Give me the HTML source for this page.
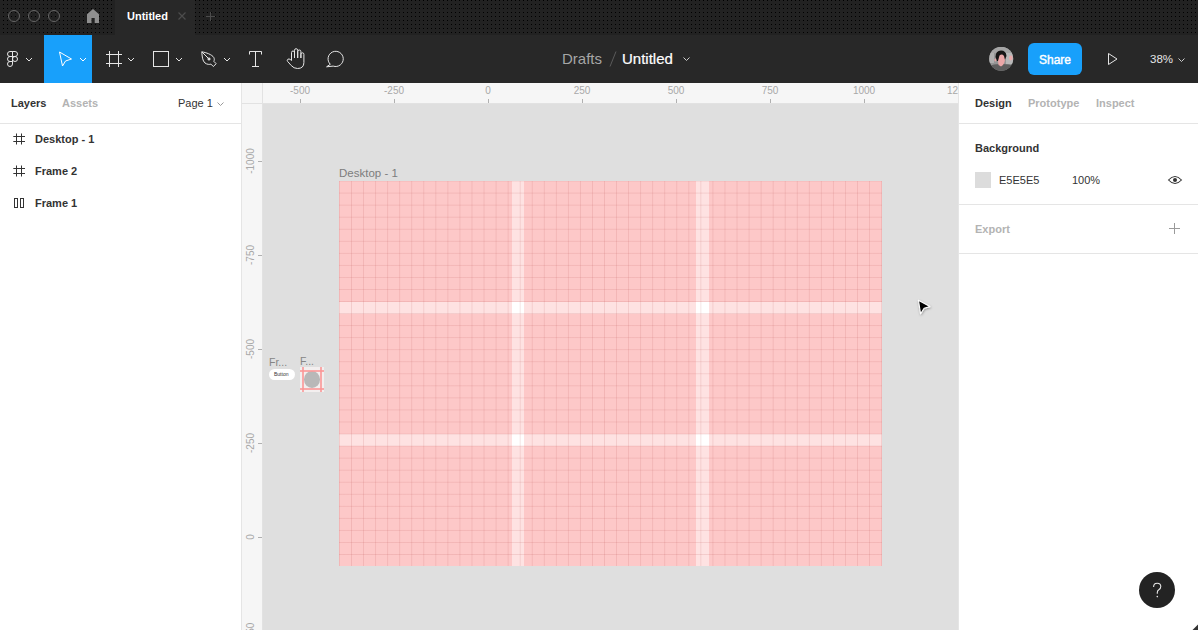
<!DOCTYPE html>
<html><head><meta charset="utf-8">
<style>
*{margin:0;padding:0;box-sizing:border-box}
html,body{width:1198px;height:630px;overflow:hidden;background:#fff;font-family:"Liberation Sans",sans-serif}
.a{position:absolute}
#title{left:0;top:0;width:1198px;height:35px;background:#202020}
#tab{left:115px;top:0;width:80px;height:35px;background:#282828}
#tool{left:0;top:35px;width:1198px;height:48px;background:#282828}
#sel{left:44px;top:35px;width:48px;height:48px;background:#18a0fb}
#lp{left:0;top:83px;width:242px;height:547px;background:#fff;border-right:1px solid #e5e5e5}
#rp{left:958px;top:83px;width:240px;height:547px;background:#fff;border-left:1px solid #e5e5e5}
#canvas{left:242px;top:83px;width:716px;height:547px;background:#dfdfdf}
#rtop{left:242px;top:83px;width:716px;height:21px;background:#f6f6f6;border-bottom:1px solid #e2e2e2}
#rleft{left:242px;top:83px;width:21px;height:547px;background:#f6f6f6;border-right:1px solid #e2e2e2}
.rl{font-size:10px;color:#a8a8a8;white-space:nowrap}
.tick{background:#b0b0b0}
svg{position:absolute;overflow:visible}
.t11b{font-size:11px;font-weight:bold;color:#333;white-space:nowrap}
</style></head><body>
<div id="title" class="a"></div>
<div class="a" style="left:0;top:0;width:1198px;height:35px;background:repeating-linear-gradient(90deg,#222 0 3px,#000 3px 4px)"></div>
<div class="a" style="left:0;top:0;width:1198px;height:35px;background:repeating-linear-gradient(180deg,transparent 0 1px,#222 1px 4px)"></div>
<div id="tab" class="a"></div>
<!-- traffic lights -->
<svg style="left:0;top:0" width="70" height="35">
<circle cx="14" cy="16" r="5.5" fill="none" stroke="#666" stroke-width="1"/>
<circle cx="34" cy="16" r="5.5" fill="none" stroke="#666" stroke-width="1"/>
<circle cx="54" cy="16" r="5.5" fill="none" stroke="#666" stroke-width="1"/>
</svg>
<!-- home -->
<svg style="left:86px;top:9px" width="14" height="14"><path d="M1 5.2 L7 0 L13 5.2 V14 H8.7 V9 H5.5 V14 H1 Z" fill="#8f8f8f"/></svg>
<div class="a" style="left:127px;top:10px;font-size:11px;font-weight:bold;color:#fff;white-space:nowrap">Untitled</div>
<svg style="left:178px;top:12px" width="8" height="8"><path d="M0.5 0.5 L7.5 7.5 M7.5 0.5 L0.5 7.5" stroke="#4c4c4c" stroke-width="1.2"/></svg>
<svg style="left:205px;top:11px" width="10" height="10"><path d="M5.5 1 V10 M1 5.5 H10" stroke="#4c4c4c" stroke-width="1"/></svg>

<div id="tool" class="a"></div>
<div id="sel" class="a"></div>

<!-- toolbar icons -->
<svg style="left:0;top:35px" width="360" height="48">
 <g fill="none" stroke="#e6e6e6" stroke-width="1">
  <!-- figma logo -->
  <path d="M12.5 16.5 H10 A2.5 2.5 0 0 0 10 21.5 H12.5 Z M12.5 16.5 H15 A2.5 2.5 0 0 1 15 21.5 H12.5 Z M12.5 21.5 H10 A2.5 2.5 0 0 0 10 26.5 H12.5 Z M12.5 26.5 H10 A2.5 2.5 0 0 0 7.5 29 A2.5 2.5 0 0 0 12.5 29 Z"/>
  <circle cx="15" cy="24" r="2.5"/>
  <path d="M26 23 L29 26 L32 23"/>
  <!-- select cursor -->
  <path d="M59.5 17 L71.5 24 L65.5 26 L62.5 31 Z" stroke="#fff"/>
  <path d="M80 23 L83 26 L86 23" stroke="#fff"/>
  <!-- frame -->
  <path d="M109.5 16 V32 M118.5 16 V32 M106 19.5 H122 M106 28.5 H122"/>
  <path d="M128 23 L131 26 L134 23"/>
  <!-- rect -->
  <rect x="153.5" y="16.5" width="15" height="15"/>
  <path d="M176 23 L179 26 L182 23"/>
  <!-- pen -->
  <path d="M201.8 16.8 C206 17.5 212 19.5 213.8 22.5 C214.6 24 214.3 25.5 213.8 26.3 L216.2 28.7 L213.3 31.5 L210.9 29.1 C209.8 29.6 207 29.6 205 28 C202.5 26 202 21 201.8 16.8 Z"/>
  <path d="M201.8 16.8 L208.3 23.3"/>
  <circle cx="209" cy="24" r="1.1" fill="#e6e6e6"/>
  <path d="M224 23 L227 26 L230 23"/>
  <!-- text T -->
  <path d="M249.5 19.5 V16.5 H261.5 V19.5 M255.5 16.5 V31.5 M252 31.5 H259"/>
  <!-- hand -->
  <g transform="translate(0,-35)">
  <path d="M291.5 60.5 V52.5 A1.5 1.5 0 0 1 294.5 52.5 V58 M294.5 58 V50.3 A1.6 1.6 0 0 1 297.7 50.3 V58 M297.7 58 V51.6 A1.6 1.6 0 0 1 300.9 51.6 V58 M300.9 58 V54.3 A1.5 1.5 0 0 1 303.9 54.3 V62.5 Q303.9 68.5 297.5 68.5 Q293.8 68.5 291.2 65.5 L287.6 61.4 Q286.7 60.2 287.8 59.3 Q289 58.5 290.3 59.5 L291.5 60.5"/>
  <path d="M330.3 64.3 A7.6 7.6 0 1 1 333.2 66.1 L326.6 66.8 Z"/>
  </g>
 </g>
</svg>
<div class="a" style="left:562px;top:50px;font-size:15px;color:#a6a6a6;white-space:nowrap">Drafts</div>
<svg style="left:609px;top:51px" width="8" height="16"><path d="M7 0.5 L1 15.5" stroke="#5a5a5a" stroke-width="1"/></svg>
<div class="a" style="left:622px;top:50px;font-size:15px;color:#fff;white-space:nowrap;-webkit-text-stroke:0.2px #fff">Untitled</div>
<svg style="left:683px;top:57px" width="8" height="5"><path d="M0.5 0.5 L3.5 3.5 L6.5 0.5" fill="none" stroke="#ccc" stroke-width="1"/></svg>
<!-- avatar -->
<svg style="left:989px;top:47px" width="25" height="25">
 <defs><clipPath id="av"><circle cx="12.2" cy="11.8" r="12"/></clipPath></defs>
 <g clip-path="url(#av)">
  <rect width="25" height="25" fill="#959595"/>
  <rect x="0" y="0" width="25" height="6" fill="#a5a5a5"/>
  <rect x="0" y="6" width="5" height="10" fill="#b0b0b0"/>
  <rect x="17" y="6" width="8" height="11" fill="#b8b8b8"/>
  <path d="M0 19 Q6 16.5 12 17 Q19 16.5 25 19 V25 H0 Z" fill="#5e5e5e"/>
  <path d="M6.5 10 Q6.5 3.5 12 3.5 Q17 3.5 17.5 9 Q16 13 15 14 L8 14 Z" fill="#161616"/>
  <path d="M10.5 8.5 Q13 6.5 15 9 L16 13 Q15.5 16 14 18 L12 19.5 L9.5 18 L9 14 Z" fill="#eba7a8"/>
  <ellipse cx="21.8" cy="11" rx="1.8" ry="2.4" fill="#e9aaab"/>
  <ellipse cx="6.3" cy="13" rx="0.9" ry="1.5" fill="#e5a5a5"/>
 </g>
</svg>
<div class="a" style="left:1028px;top:43px;width:54px;height:32px;border-radius:6px;background:#18a0fb"></div>
<div class="a" style="left:1028px;top:44px;width:54px;height:32px;line-height:32px;text-align:center;font-size:12px;color:#fff;-webkit-text-stroke:0.4px #fff">Share</div>
<svg style="left:1107px;top:53px" width="12" height="12"><path d="M1.5 0.5 L10 6 L1.5 11.5 Z" fill="none" stroke="#e6e6e6" stroke-width="1"/></svg>
<div class="a" style="left:1150px;top:53px;font-size:11.5px;color:#e6e6e6;white-space:nowrap">38%</div>
<svg style="left:1178px;top:58px" width="8" height="5"><path d="M0.5 0.5 L3.5 3.5 L6.5 0.5" fill="none" stroke="#ccc" stroke-width="1"/></svg>

<!-- panels -->
<div id="lp" class="a"></div>
<div id="canvas" class="a"></div>
<!-- pink frame -->
<div class="a" style="left:339px;top:181px;width:543px;height:385px;background:#fff;overflow:hidden">
 <div class="a" style="left:0;top:0;width:172.7px;height:385px;background:rgba(250,20,20,0.12)"></div>
 <div class="a" style="left:184.75px;top:0;width:172.7px;height:385px;background:rgba(250,20,20,0.12)"></div>
 <div class="a" style="left:369.5px;top:0;width:174px;height:385px;background:rgba(250,20,20,0.12)"></div>
 <div class="a" style="left:0;top:0;width:543px;height:120.5px;background:rgba(250,20,20,0.12)"></div>
 <div class="a" style="left:0;top:132.6px;width:543px;height:120.5px;background:rgba(250,20,20,0.12)"></div>
 <div class="a" style="left:0;top:265.2px;width:543px;height:121px;background:rgba(250,20,20,0.12)"></div>
 <div class="a" style="left:0;top:0;width:543px;height:385px;background-image:linear-gradient(90deg, rgba(190,90,90,0.17) 1px, transparent 1px),linear-gradient(0deg, rgba(190,90,90,0.17) 1px, transparent 1px);background-size:12.05px 12.05px;background-position:0 0,0 0.5px"></div>
</div>
<div class="a" style="left:339px;top:167px;font-size:11.5px;color:#7d7d7d;white-space:nowrap">Desktop - 1</div>
<!-- small frames -->
<div class="a" style="left:269px;top:355.5px;font-size:10.5px;color:#858585;white-space:nowrap">Fr...</div>
<div class="a" style="left:300px;top:354.5px;font-size:10.5px;color:#858585;white-space:nowrap">F...</div>
<div class="a" style="left:269px;top:369px;width:26px;height:11px;border-radius:6px;background:#fff"></div>
<div class="a" style="left:274px;top:371px;font-size:5px;color:#333;white-space:nowrap">Button</div>
<div class="a" style="left:300px;top:367px;width:24px;height:25px;background:#f3efef"></div>
<div class="a" style="left:303.8px;top:371px;width:16.6px;height:17px;border-radius:50%;background:#b8b8b8"></div>
<div class="a" style="left:302px;top:367px;width:2px;height:25px;background:rgba(250,150,150,0.8)"></div>
<div class="a" style="left:320px;top:367px;width:2px;height:25px;background:rgba(250,150,150,0.8)"></div>
<div class="a" style="left:300px;top:370px;width:24px;height:2px;background:rgba(250,150,150,0.8)"></div>
<div class="a" style="left:300px;top:388px;width:24px;height:2px;background:rgba(250,150,150,0.8)"></div>
<!-- cursor -->
<svg style="left:912px;top:294px" width="26" height="26">
 <defs><filter id="sh" x="-50%" y="-50%" width="200%" height="200%"><feDropShadow dx="0.5" dy="1" stdDeviation="0.8" flood-color="#000" flood-opacity="0.35"/></filter></defs><path filter="url(#sh)" d="M6.4 6.2 L17.9 12.6 L12.1 14.3 L8.6 19.8 Z" fill="#000" stroke="#fff" stroke-width="1.1" stroke-linejoin="round"/>
</svg>
<!-- rulers -->
<div id="rtop" class="a"></div>
<div id="rleft" class="a"></div>
<div class="a rl" style="left:260px;top:85px;width:80px;text-align:center">-500</div><div class="a tick" style="left:300px;top:99px;width:1px;height:4px"></div><div class="a rl" style="left:354px;top:85px;width:80px;text-align:center">-250</div><div class="a tick" style="left:394px;top:99px;width:1px;height:4px"></div><div class="a rl" style="left:448px;top:85px;width:80px;text-align:center">0</div><div class="a tick" style="left:488px;top:99px;width:1px;height:4px"></div><div class="a rl" style="left:542px;top:85px;width:80px;text-align:center">250</div><div class="a tick" style="left:582px;top:99px;width:1px;height:4px"></div><div class="a rl" style="left:636px;top:85px;width:80px;text-align:center">500</div><div class="a tick" style="left:676px;top:99px;width:1px;height:4px"></div><div class="a rl" style="left:730px;top:85px;width:80px;text-align:center">750</div><div class="a tick" style="left:770px;top:99px;width:1px;height:4px"></div><div class="a rl" style="left:824px;top:85px;width:80px;text-align:center">1000</div><div class="a tick" style="left:864px;top:99px;width:1px;height:4px"></div><div class="a rl" style="left:918px;top:85px;width:80px;text-align:center">1250</div><div class="a tick" style="left:958px;top:99px;width:1px;height:4px"></div><div class="a rl" style="left:210.5px;top:155px;width:80px;height:12px;line-height:12px;text-align:center;transform:rotate(-90deg)">-1000</div><div class="a tick" style="left:258px;top:161px;width:4px;height:1px"></div><div class="a rl" style="left:210.5px;top:249px;width:80px;height:12px;line-height:12px;text-align:center;transform:rotate(-90deg)">-750</div><div class="a tick" style="left:258px;top:255px;width:4px;height:1px"></div><div class="a rl" style="left:210.5px;top:343px;width:80px;height:12px;line-height:12px;text-align:center;transform:rotate(-90deg)">-500</div><div class="a tick" style="left:258px;top:349px;width:4px;height:1px"></div><div class="a rl" style="left:210.5px;top:437px;width:80px;height:12px;line-height:12px;text-align:center;transform:rotate(-90deg)">-250</div><div class="a tick" style="left:258px;top:443px;width:4px;height:1px"></div><div class="a rl" style="left:210.5px;top:531px;width:80px;height:12px;line-height:12px;text-align:center;transform:rotate(-90deg)">0</div><div class="a tick" style="left:258px;top:537px;width:4px;height:1px"></div><div class="a rl" style="left:210.5px;top:625px;width:80px;height:12px;line-height:12px;text-align:center;transform:rotate(-90deg)">250</div><div class="a tick" style="left:258px;top:631px;width:4px;height:1px"></div>
<div class="a" style="left:242px;top:83px;width:21px;height:21px;background:#f6f6f6;border-right:1px solid #e2e2e2;border-bottom:1px solid #e2e2e2"></div>
<div class="a" style="left:958px;top:83px;width:240px;height:547px;background:#fff;border-left:1px solid #e5e5e5"></div>


<div class="a t11b" style="left:11px;top:97px">Layers</div>
<div class="a t11b" style="left:62px;top:97px;color:#b3b3b3">Assets</div>
<div class="a" style="left:178px;top:97px;font-size:11px;color:#333;white-space:nowrap">Page 1</div>
<svg style="left:217px;top:102px" width="8" height="5"><path d="M0.5 0.5 L3.5 3.5 L6.5 0.5" fill="none" stroke="#999" stroke-width="1"/></svg>
<div class="a" style="left:0;top:123px;width:241px;height:1px;background:#e5e5e5"></div>
<svg style="left:0;top:125px" width="40" height="90"><g stroke="#333" stroke-width="1" fill="none">
 <path d="M16.5 8.5 V19.5 M21.5 8.5 V19.5 M13.3 11.5 H25 M13.3 16.5 H25"/>
 <path d="M16.5 40.5 V51.5 M21.5 40.5 V51.5 M13.3 43.5 H25 M13.3 48.5 H25"/>
 <rect x="14.5" y="73.5" width="3" height="9"/><rect x="20.5" y="73.5" width="3" height="9"/>
</g></svg>
<div class="a t11b" style="left:35px;top:133px">Desktop - 1</div>
<div class="a t11b" style="left:35px;top:165px">Frame 2</div>
<div class="a t11b" style="left:35px;top:197px">Frame 1</div>
<!-- right panel -->
<div class="a t11b" style="left:975px;top:97px">Design</div>
<div class="a t11b" style="left:1028px;top:97px;color:#b3b3b3">Prototype</div>
<div class="a t11b" style="left:1096px;top:97px;color:#b3b3b3">Inspect</div>
<div class="a" style="left:959px;top:123px;width:239px;height:1px;background:#e5e5e5"></div>
<div class="a t11b" style="left:975px;top:142px">Background</div>
<div class="a" style="left:975px;top:172px;width:16px;height:16px;background:#dcdcdc"></div>
<div class="a" style="left:999px;top:174px;font-size:11px;color:#333;white-space:nowrap">E5E5E5</div>
<div class="a" style="left:1072px;top:174px;font-size:11px;color:#333;white-space:nowrap">100%</div>
<svg style="left:1167px;top:174px" width="16" height="12"><path d="M1.5 6 Q8 -1 14.5 6 Q8 13 1.5 6 Z" fill="none" stroke="#333" stroke-width="1.1"/><circle cx="8" cy="6" r="2" fill="#333"/></svg>
<div class="a" style="left:959px;top:204px;width:239px;height:1px;background:#e5e5e5"></div>
<div class="a t11b" style="left:975px;top:223px;color:#b3b3b3">Export</div>
<svg style="left:1169px;top:223px" width="11" height="11"><path d="M5.5 0 V11 M0 5.5 H11" stroke="#9a9a9a" stroke-width="1"/></svg>
<div class="a" style="left:959px;top:253px;width:239px;height:1px;background:#e5e5e5"></div>
<!-- help -->
<div class="a" style="left:1139px;top:572px;width:36px;height:36px;border-radius:50%;background:#232323"></div>
<svg style="left:1139px;top:572px" width="36" height="36"><path d="M14.6 15 Q14.6 11.3 18.2 11.3 Q21.8 11.3 21.8 14.6 Q21.8 16.6 19.8 17.8 Q18.3 18.7 18.3 20.5 V21.8" fill="none" stroke="#e8e8e8" stroke-width="1.1"/><circle cx="18.3" cy="24.6" r="0.8" fill="#e8e8e8"/></svg>
<svg style="left:1192px;top:624px" width="6" height="6"><path d="M6 0.5 L6 6 L0.5 6 Z" fill="#333"/></svg>
</body></html>
